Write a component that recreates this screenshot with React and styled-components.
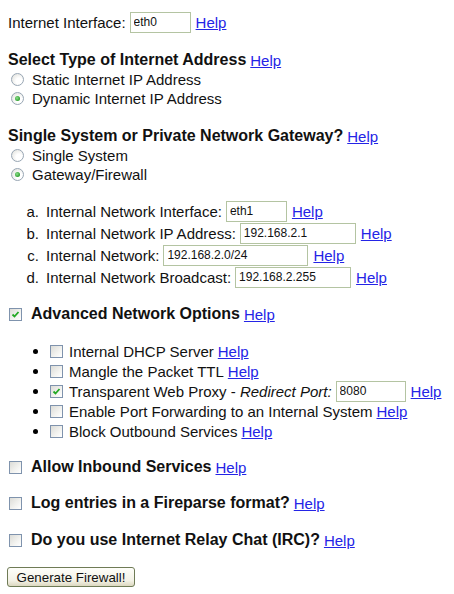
import React from "react";
import styled, { createGlobalStyle } from "styled-components";

const GlobalStyle = createGlobalStyle`
  body {
    margin: 0;
    background: #ffffff;
    font-family: "Liberation Sans", Arial, sans-serif;
    color: #111;
  }
`;

const Form = styled.form`
  display: flex;
  flex-direction: column;
  padding: 11px 8px 0 8px;
  font-size: 15px;
`;

const Group = styled.div`
  display: flex;
  flex-direction: column;
  margin-top: ${(p) => p.$mt ?? 0}px;
`;

const Line = styled.div`
  display: flex;
  align-items: center;
  height: ${(p) => p.$h ?? 20}px;
  margin-top: ${(p) => p.$mt ?? 0}px;
  white-space: nowrap;
`;

const Heading = styled.span`
  font-weight: bold;
  font-size: 16px;
`;

const Help = styled.a`
  color: #2424e6;
  text-decoration: underline;
  margin-left: ${(p) => p.$gap ?? 4}px;
  cursor: pointer;
`;

const TextBox = styled.input`
  box-sizing: border-box;
  width: ${(p) => p.$w}px;
  height: 21px;
  margin-left: ${(p) => p.$gap ?? 4}px;
  padding: 0 3px;
  border: 1px solid #b4c4a2;
  background: #fff;
  font-family: "Liberation Sans", Arial, sans-serif;
  font-size: 12px;
  color: #111;
  outline: none;
`;

const Marker = styled.span`
  width: 31px;
  text-align: right;
  margin-right: 7px;
`;

const Bullet = styled.span`
  width: 5px;
  height: 5px;
  border-radius: 50%;
  background: #000;
  margin: 0 12px 0 25px;
`;

const RadioCircle = styled.span`
  box-sizing: border-box;
  width: 13px;
  height: 13px;
  margin: 0 8px 0 3px;
  border-radius: 50%;
  border: 1px solid #98a6b4;
  background: radial-gradient(circle at 65% 65%, #ffffff 30%, #dcdcd6 100%);
  display: flex;
  align-items: center;
  justify-content: center;

  &::after {
    content: "";
    display: ${(p) => (p.$on ? "block" : "none")};
    width: 5px;
    height: 5px;
    border-radius: 50%;
    background: radial-gradient(circle at 40% 40%, #8fe08f 0%, #2d9e2d 70%);
  }
`;

const Box = styled.span`
  box-sizing: border-box;
  width: 13px;
  height: 13px;
  margin-left: ${(p) => p.$ml ?? 0}px;
  margin-right: ${(p) => p.$mr ?? 0}px;
  border: 1px solid #7f93ad;
  background: linear-gradient(135deg, #dcdcd7 0%, #f3f3f0 60%, #ffffff 100%);
  display: flex;
  align-items: center;
  justify-content: center;

  svg {
    display: block;
  }
`;

const Italic = styled.em`
  font-style: italic;
`;

const Button = styled.button`
  margin-top: 17px;
  margin-left: -1px;
  align-self: flex-start;
  box-sizing: border-box;
  height: 20px;
  width: 128px;
  padding: 0 8px;
  border: 1px solid #6f7b56;
  border-radius: 3px;
  background: linear-gradient(#fefefa 0%, #f3f1e6 70%, #dcd8c0 100%);
  font-family: "Liberation Sans", Arial, sans-serif;
  font-size: 13.33px;
  color: #111;
`;

function Radio({ on, children }) {
  return (
    <Line $h={19}>
      <RadioCircle $on={on} />
      <span>{children}</span>
    </Line>
  );
}

function Check({ on, ml, mr }) {
  return (
    <Box $ml={ml} $mr={mr}>
      {on && (
        <svg width="11" height="11" viewBox="0 0 11 11">
          <path d="M2.5 5.5 L4.5 7.5 L8.5 3" fill="none" stroke="#22a822" strokeWidth="1.8" />
        </svg>
      )}
    </Box>
  );
}

function SubField({ mark, label, value, w }) {
  return (
    <Line $h={22}>
      <Marker>{mark}</Marker>
      <span>{label}</span>
      <TextBox $w={w} defaultValue={value} />
      <Help $gap={5}>Help</Help>
    </Line>
  );
}

function Option({ on, children }) {
  return (
    <Line>
      <Bullet />
      <Check on={on} mr={6} />
      {children}
    </Line>
  );
}

function TopOption({ mt, children }) {
  return (
    <Line $mt={mt}>
      <Check ml={1} mr={9} />
      <Heading>{children}</Heading>
      <Help>Help</Help>
    </Line>
  );
}

export default function App() {
  return (
    <>
      <GlobalStyle />
      <Form onSubmit={(e) => e.preventDefault()}>
        <Line $h={22}>
          <span>Internet Interface:</span>
          <TextBox $w={61} defaultValue="eth0" />
          <Help $gap={5}>Help</Help>
        </Line>

        <Line $mt={17}>
          <Heading>Select Type of Internet Address</Heading>
          <Help>Help</Help>
        </Line>
        <Radio>Static Internet IP Address</Radio>
        <Radio on>Dynamic Internet IP Address</Radio>

        <Line $mt={18}>
          <Heading>Single System or Private Network Gateway?</Heading>
          <Help>Help</Help>
        </Line>
        <Radio>Single System</Radio>
        <Radio on>Gateway/Firewall</Radio>

        <Group $mt={16}>
          <SubField mark="a." label="Internal Network Interface:" value="eth1" w={61} />
          <SubField mark="b." label="Internal Network IP Address:" value="192.168.2.1" w={116} />
          <SubField mark="c." label="Internal Network:" value="192.168.2.0/24" w={145} />
          <SubField mark="d." label="Internal Network Broadcast:" value="192.168.2.255" w={116} />
        </Group>

        <Line $mt={16}>
          <Check on ml={1} mr={9} />
          <Heading>Advanced Network Options</Heading>
          <Help>Help</Help>
        </Line>

        <Group $mt={17}>
          <Option>
            <span>Internal DHCP Server</span>
            <Help>Help</Help>
          </Option>
          <Option>
            <span>Mangle the Packet TTL</span>
            <Help>Help</Help>
          </Option>
          <Option on>
            <span>
              Transparent Web Proxy - <Italic>Redirect Port:</Italic>
            </span>
            <TextBox $w={70} defaultValue="8080" />
            <Help $gap={5}>Help</Help>
          </Option>
          <Option>
            <span>Enable Port Forwarding to an Internal System</span>
            <Help>Help</Help>
          </Option>
          <Option>
            <span>Block Outbound Services</span>
            <Help>Help</Help>
          </Option>
        </Group>

        <TopOption mt={16}>Allow Inbound Services</TopOption>
        <TopOption mt={16}>Log entries in a Fireparse format?</TopOption>
        <TopOption mt={17}>Do you use Internet Relay Chat (IRC)?</TopOption>

        <Button type="submit">Generate Firewall!</Button>
      </Form>
    </>
  );
}
